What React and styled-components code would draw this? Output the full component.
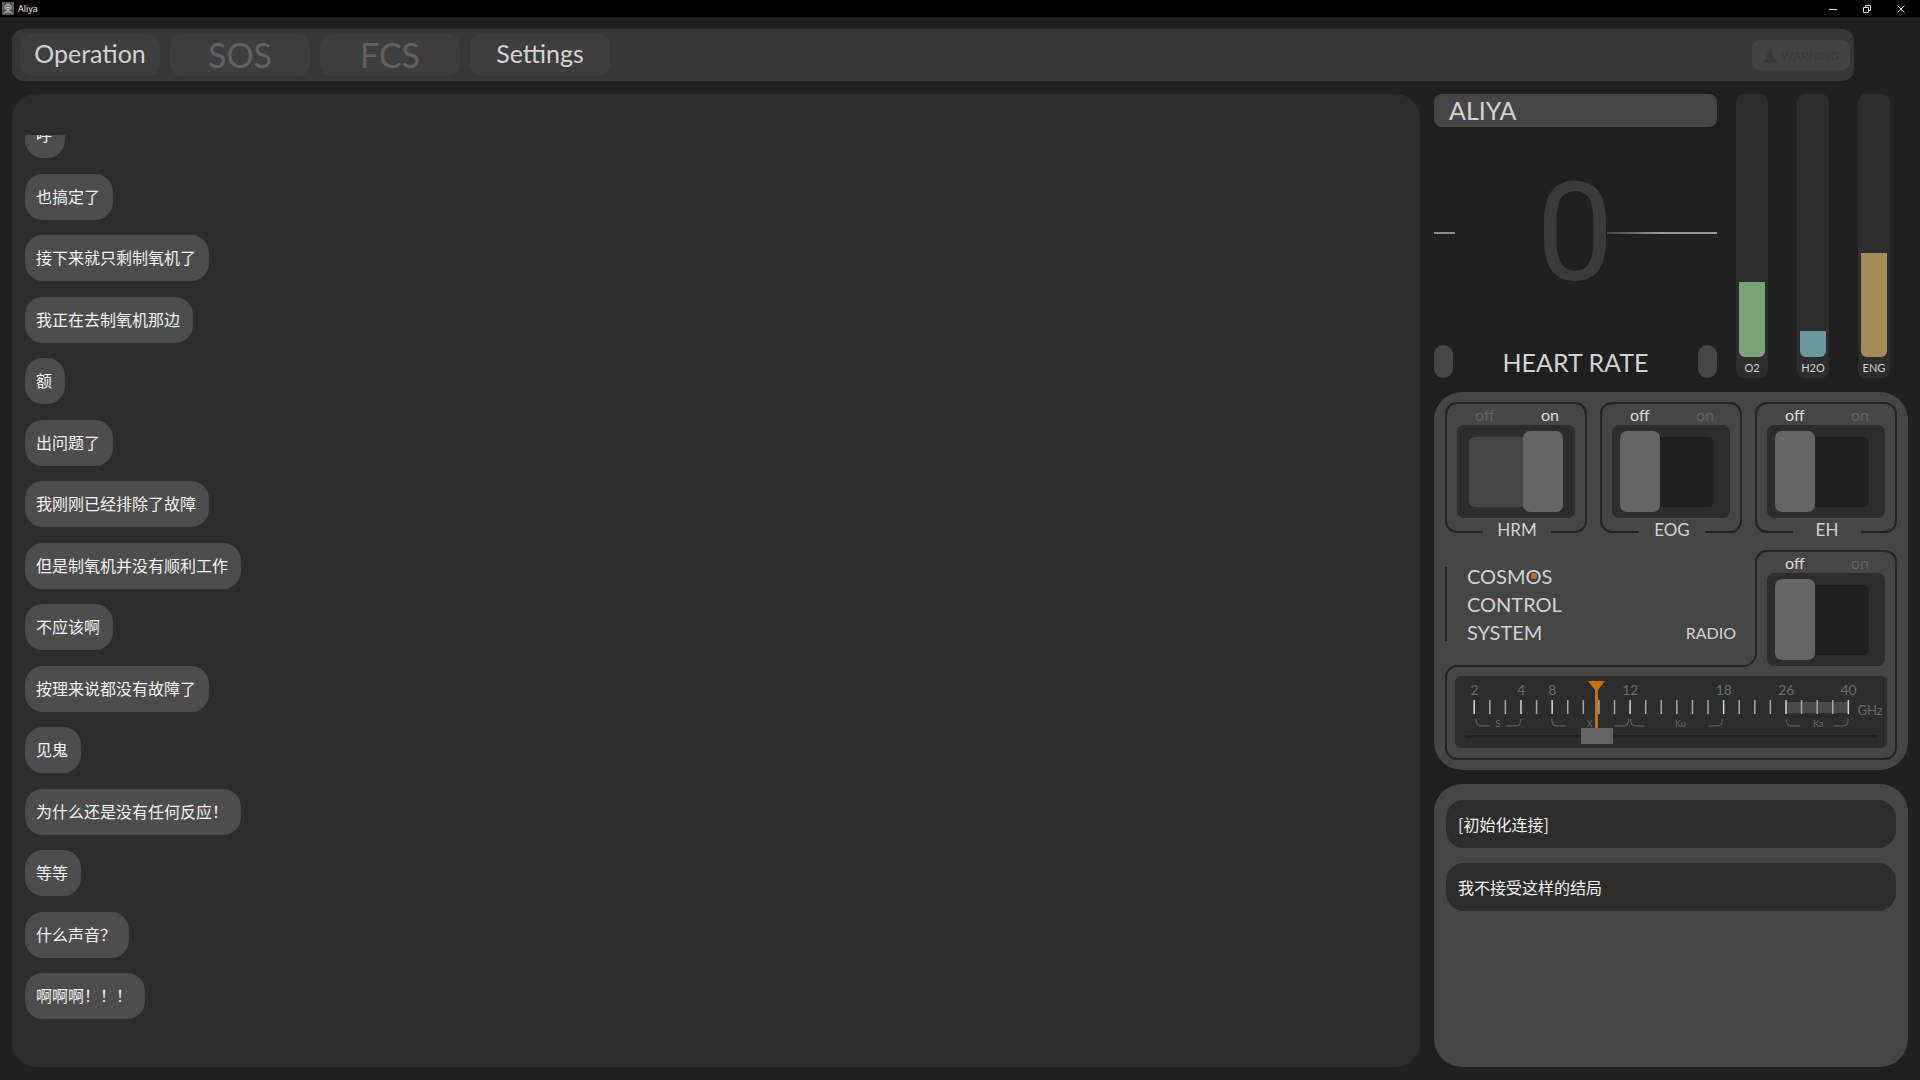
import React, { useState } from 'react';
import styled, { createGlobalStyle } from 'styled-components';

const colors = {
  page: '#202020',
  well: '#2d2d2d',
  bar: '#373737',
  tab: '#3e3e3e',
  panel: '#464646',
  bubble: '#4d4d4d',
  knob: '#656565',
  text: '#d2d2d2',
  dim: '#626262',
  accent: '#c8700c',
};

const GlobalStyle = createGlobalStyle`
  * {
    box-sizing: border-box;
  }

  body {
    margin: 0;
    background: ${colors.page};
    color: ${colors.text};
    font-family: Lato, 'Noto Sans CJK SC', sans-serif;
  }

  button, input {
    margin: 0;
    padding: 0;
    border: 0;
    color: inherit;
    font: inherit;
  }
`;

const Page = styled.div`
  display: flex;
  flex-direction: column;
  height: 100vh;
  min-height: 960px;
`;

const TitleBar = styled.header`
  display: flex;
  flex: none;
  align-items: center;
  gap: 4px;
  height: 17px;
  padding: 0 2px;
  background: #000;
  color: #fff;
  font-family: 'Open Sans', sans-serif;
  font-size: 9px;
`;

const WindowButtons = styled.div`
  display: flex;
  margin-left: auto;
`;

const WindowButton = styled.button`
  display: flex;
  align-items: center;
  justify-content: center;
  width: 34px;
  height: 17px;
  background: none;
`;

const NavBar = styled.nav`
  display: flex;
  flex: none;
  align-items: center;
  gap: 10px;
  height: 52px;
  margin: 12px 66px 13px 12px;
  padding: 0 4px 0 8px;
  border-radius: 12px;
  background: ${colors.bar};
`;

const Tab = styled.button`
  width: 140px;
  height: 42px;
  padding-bottom: ${({ $muted }) => ($muted ? 0 : 4)}px;
  border-radius: 12px;
  background: ${colors.tab};
  color: ${({ $muted }) => ($muted ? colors.dim : colors.text)};
  font-size: ${({ $muted }) => ($muted ? 34 : 25)}px;
  line-height: 38px;
`;

const Warning = styled.button`
  display: flex;
  align-items: center;
  justify-content: center;
  gap: 4px;
  width: 98px;
  height: 30px;
  margin-left: auto;
  border-radius: 8px;
  background: #434343;
  color: #393939;
  font-size: 12px;
`;

const Main = styled.main`
  display: grid;
  flex: 1;
  grid-template-columns: minmax(0, 1fr) 474px;
  gap: 14px;
  min-height: 0;
  padding: 0 12px 13px;
`;

const Chat = styled.section`
  min-height: 0;
  padding: 41px 13px 48px;
  border-radius: 24px;
  background: ${colors.well};
`;

const ChatView = styled.div`
  display: flex;
  height: 100%;
  overflow: hidden;
`;

const Messages = styled.ul`
  display: flex;
  flex: 1;
  flex-direction: column;
  align-items: flex-start;
  justify-content: space-between;
  margin: -23px 0 0;
  padding: 0;
  list-style: none;
`;

const Message = styled.li`
  padding: 0 13px 2px 11px;
  border-radius: 18px;
  background: ${colors.bubble};
  color: #f2f2f2;
  font-family: 'Noto Sans CJK SC', sans-serif;
  font-size: 16px;
  line-height: 44px;
`;

const Side = styled.aside`
  display: flex;
  flex-direction: column;
  gap: 14px;
  min-height: 0;
`;

const Vitals = styled.section`
  display: flex;
  gap: 19px;
  height: 284px;
  padding-right: 18px;
`;

const Heart = styled.div`
  display: flex;
  flex: 1;
  flex-direction: column;
`;

const Name = styled.h1`
  margin: 0;
  padding: 0 15px;
  border-radius: 8px;
  background: ${colors.panel};
  font-size: 25px;
  font-weight: 400;
  line-height: 33px;
`;

const Pulse = styled.div`
  display: flex;
  flex: 1;
  align-items: center;
  justify-content: space-between;
  padding-bottom: 6px;
`;

const Trace = styled.div`
  flex: none;
  width: ${({ $width }) => $width}px;
  height: 2px;
  background: ${({ $fade }) => ($fade ? 'linear-gradient(90deg, #444, #999 50%)' : '#8a8a8a')};
`;

const Rate = styled.div`
  margin: 0 -8px 0 80px;
  color: #3b3b3b;
  font-family: Roboto, sans-serif;
  font-size: 138px;
  line-height: 160px;
`;

const HeartFooter = styled.div`
  display: flex;
  align-items: center;
  justify-content: space-between;
  height: 33px;
  font-size: 25px;
  line-height: 32px;
`;

const Pill = styled.span`
  width: 19px;
  height: 33px;
  border-radius: 10px;
  background: ${colors.panel};
`;

const Gauges = styled.div`
  display: flex;
  gap: 29px;
`;

const Gauge = styled.div`
  display: flex;
  flex-direction: column;
  justify-content: flex-end;
  width: 32px;
  padding: 0 3px;
  border-radius: 8px;
  background: ${colors.well};
  font-size: 11px;
  line-height: 21px;
  text-align: center;
`;

const Level = styled.div`
  border-radius: 0 0 6px 6px;
  background: ${({ $color }) => $color};
`;

const Controls = styled.section`
  height: 378px;
  padding: 10px 11px;
  border-radius: 28px;
  background: ${colors.panel};
`;

const SwitchRow = styled.div`
  display: flex;
  justify-content: space-between;
`;

const SwitchFrame = styled.div`
  position: relative;
  width: 142px;
  height: ${({ $open }) => ($open ? 117 : 131)}px;
  border: 2px solid #242424;
  border-bottom-width: ${({ $open }) => ($open ? 0 : 2)}px;
  border-radius: ${({ $open }) => ($open ? '12px 12px 0 0' : '12px')};
  background: ${colors.panel};
`;

const SwitchStates = styled.div`
  display: flex;
  justify-content: space-between;
  padding: 0 26px 0 28px;
  font-size: 16px;
  line-height: 21px;
`;

const SwitchState = styled.span`
  color: ${({ $lit }) => ($lit ? '#dcdcdc' : colors.dim)};
`;

const SwitchBody = styled.label`
  display: block;
  width: 118px;
  height: 93px;
  margin: 0 auto;
  padding: 12px;
  border-radius: 7px;
  background: ${colors.well};
`;

const SwitchInput = styled.input`
  display: block;
  position: relative;
  width: 90px;
  height: 70px;
  border-radius: 6px;
  background: ${colors.page};
  appearance: none;

  &::before {
    position: absolute;
    top: -6px;
    left: -4px;
    width: 40px;
    height: 81px;
    border-radius: 7px;
    background: ${colors.knob};
    content: '';
  }

  &:checked {
    background: ${colors.panel};
  }

  &:checked::before {
    left: 54px;
  }
`;

const SwitchName = styled.span`
  position: absolute;
  bottom: -10px;
  left: 36px;
  width: 68px;
  background: ${colors.panel};
  font-size: 17px;
  line-height: 22px;
  text-align: center;
`;

const RadioRow = styled.div`
  display: flex;
  justify-content: space-between;
  height: 115px;
  margin-top: 17px;
`;

const Brand = styled.div`
  align-self: flex-start;
  height: 74px;
  margin-top: 17px;
  padding-left: 20px;
  border-left: 2px solid #242424;
  font-size: 20px;
  line-height: 28px;
`;

const BrandLines = styled.div`
  margin-top: -5px;
`;

const Eye = styled.span`
  position: relative;

  &::after {
    position: absolute;
    top: 50%;
    left: 50%;
    width: 6px;
    height: 6px;
    margin: -3px;
    border-radius: 3px;
    background: ${colors.accent};
    content: '';
  }
`;

const RadioName = styled.span`
  align-self: flex-end;
  margin: 0 19px 21px auto;
  font-size: 16px;
  line-height: 22px;
`;

// turns the frame of the radio switch into the frame of the tuner
const RadioFrame = styled(SwitchFrame)`
  z-index: 1;

  &::after {
    position: absolute;
    bottom: 0;
    left: -14px;
    width: 14px;
    height: 14px;
    background: radial-gradient(circle at 0 0, ${colors.panel} 12px, #242424 12px, #242424 14px, ${colors.panel} 14px);
    content: '';
  }
`;

const Tuner = styled.div`
  padding: 9px 8px 10px;
  border: 2px solid #242424;
  border-radius: 12px 0 12px 12px;
`;

const Dial = styled.div`
  position: relative;
  border-radius: 6px;
  background: ${colors.well};
`;

const DialScale = styled.svg`
  display: block;
  width: 100%;
  height: 72px;
`;

const DialInput = styled.input`
  position: absolute;
  right: 10px;
  bottom: 4px;
  left: 10px;
  width: calc(100% - 20px);
  height: 16px;
  background: linear-gradient(#222, #222) center / 100% 3px no-repeat;
  appearance: none;

  &::-webkit-slider-thumb {
    width: 32px;
    height: 16px;
    background: ${colors.knob};
    appearance: none;
  }
`;

const Replies = styled.section`
  display: flex;
  flex: 1;
  flex-direction: column;
  gap: 15px;
  padding: 16px 12px;
  border-radius: 28px;
  background: ${colors.panel};
`;

const Reply = styled.button`
  padding: 0 12px;
  border-radius: 18px;
  background: ${colors.well};
  color: #f2f2f2;
  font-family: 'Noto Sans CJK SC', sans-serif;
  font-size: 16px;
  line-height: 48px;
  text-align: left;
`;

const messages = [
  '呼',
  '也搞定了',
  '接下来就只剩制氧机了',
  '我正在去制氧机那边',
  '额',
  '出问题了',
  '我刚刚已经排除了故障',
  '但是制氧机并没有顺利工作',
  '不应该啊',
  '按理来说都没有故障了',
  '见鬼',
  '为什么还是没有任何反应！',
  '等等',
  '什么声音？',
  '啊啊啊！！！',
];

const gauges = [
  { name: 'O2', level: 75, color: '#7aa277' },
  { name: 'H2O', level: 26, color: '#6c98a2' },
  { name: 'ENG', level: 104, color: '#a38c57' },
];

const marks = { 0: '2', 3: '4', 5: '8', 10: '12', 16: '18', 20: '26', 24: '40' };

const bands = [
  { name: 'S', from: 21, to: 66, label: 43 },
  { name: 'X', from: 97, to: 174, label: 135 },
  { name: 'Ku', from: 176, to: 268, label: 226 },
  { name: 'Ka', from: 332, to: 394, label: 364 },
];

const tickX = index => 19.5 + index * 15.625;

const Switch = ({ name, label, defaultOn = false, frame: Frame = SwitchFrame, open = false }) => {
  const [on, setOn] = useState(defaultOn);

  return (
    <Frame $open={open}>
      <SwitchStates>
        <SwitchState $lit={!on}>off</SwitchState>
        <SwitchState $lit={on}>on</SwitchState>
      </SwitchStates>
      <SwitchBody>
        <SwitchInput type="checkbox" aria-label={label} checked={on} onChange={() => setOn(!on)} />
      </SwitchBody>
      {name && <SwitchName>{name}</SwitchName>}
    </Frame>
  );
};

const FrequencyDial = () => {
  const [value, setValue] = useState(304);
  const needle = 26 + (value / 1000) * 381;

  return (
    <Dial>
      <DialScale viewBox="0 0 433 72">
        <rect x={tickX(20)} y="26" width="62" height="11" fill="#494949" />
        {Array.from({ length: 25 }, (_, index) => (
          <rect key={index} x={tickX(index) - 1} y="24" width="1.5" height="14" fill={marks[index] ? '#d8d8d8' : '#a8a8a8'} />
        ))}
        <g fill="#6c6c6c" textAnchor="middle" fontFamily="Lato, sans-serif" fontSize="14">
          {Object.keys(marks).map(index => (
            <text key={index} x={tickX(Number(index))} y="19">{marks[index]}</text>
          ))}
          <text x="416" y="39" fontSize="13">GHz</text>
          {bands.map(band => (
            <text key={band.name} x={band.label} y="51" fontSize="9">{band.name}</text>
          ))}
        </g>
        <g fill="none" stroke="#5c5c5c" strokeWidth="1.2">
          {bands.map(band => (
            <path
              key={band.name}
              d={`M${band.from} 43q0 7 5 7h9M${band.to} 43q0 7 -5 7h-9`}
            />
          ))}
        </g>
        <path d={`M${needle - 8.5} 5h17l-7 9v38h-3v-38z`} fill={colors.accent} />
      </DialScale>
      <DialInput
        type="range"
        aria-label="Frequency"
        min="0"
        max="1000"
        value={value}
        onChange={event => setValue(Number(event.target.value))}
      />
    </Dial>
  );
};

const App = () => (
  <Page>
    <GlobalStyle />
    <TitleBar>
      <svg width="12" height="13" viewBox="0 0 12 13">
        <rect width="12" height="13" fill="#555" />
        <path d="M3 3.500q3-3 6 0v3q-3 3-6 0zM2 11.500q4-4 8 0M6 3v6M4 5.500h4" fill="none" stroke="#c4c4c4" />
      </svg>
      <span>Aliya</span>
      <WindowButtons>
        <WindowButton aria-label="Minimize">
          <svg width="8" height="8" stroke="#e0e0e0"><path d="M0 4.500h8" /></svg>
        </WindowButton>
        <WindowButton aria-label="Restore">
          <svg width="8" height="8" fill="none" stroke="#e0e0e0"><path d="M.5 2.500h5v5h-5zM2.500 2.500v-2h5v5h-2" /></svg>
        </WindowButton>
        <WindowButton aria-label="Close">
          <svg width="8" height="8" stroke="#e0e0e0"><path d="M.5 .5l7 7M7.500 .5l-7 7" /></svg>
        </WindowButton>
      </WindowButtons>
    </TitleBar>

    <NavBar>
      <Tab>Operation</Tab>
      <Tab $muted>SOS</Tab>
      <Tab $muted>FCS</Tab>
      <Tab>Settings</Tab>
      <Warning>
        <svg width="14" height="17" viewBox="0 0 14 17" fill="currentColor">
          <path d="M7 0l4 11H3zM2 12h10l2 4H0z" />
        </svg>
        WARNING
      </Warning>
    </NavBar>

    <Main>
      <Chat>
        <ChatView>
          <Messages>
            {messages.map(message => <Message key={message}>{message}</Message>)}
          </Messages>
        </ChatView>
      </Chat>

      <Side>
        <Vitals>
          <Heart>
            <Name>ALIYA</Name>
            <Pulse>
              <Trace $width={21} />
              <Rate>0</Rate>
              <Trace $width={110} $fade />
            </Pulse>
            <HeartFooter>
              <Pill />
              HEART RATE
              <Pill />
            </HeartFooter>
          </Heart>
          <Gauges>
            {gauges.map(({ name, level, color }) => (
              <Gauge key={name}>
                <Level $color={color} style={{ height: level }} />
                {name}
              </Gauge>
            ))}
          </Gauges>
        </Vitals>

        <Controls>
          <SwitchRow>
            <Switch name="HRM" label="HRM" defaultOn />
            <Switch name="EOG" label="EOG" />
            <Switch name="EH" label="EH" />
          </SwitchRow>
          <RadioRow>
            <Brand>
              <BrandLines>
                <div>COSM<Eye>O</Eye>S</div>
                <div>CONTROL</div>
                <div>SYSTEM</div>
              </BrandLines>
            </Brand>
            <RadioName>RADIO</RadioName>
            <Switch label="Radio" frame={RadioFrame} open />
          </RadioRow>
          <Tuner>
            <FrequencyDial />
          </Tuner>
        </Controls>

        <Replies>
          <Reply>[初始化连接]</Reply>
          <Reply>我不接受这样的结局</Reply>
        </Replies>
      </Side>
    </Main>
  </Page>
);

export default App;
